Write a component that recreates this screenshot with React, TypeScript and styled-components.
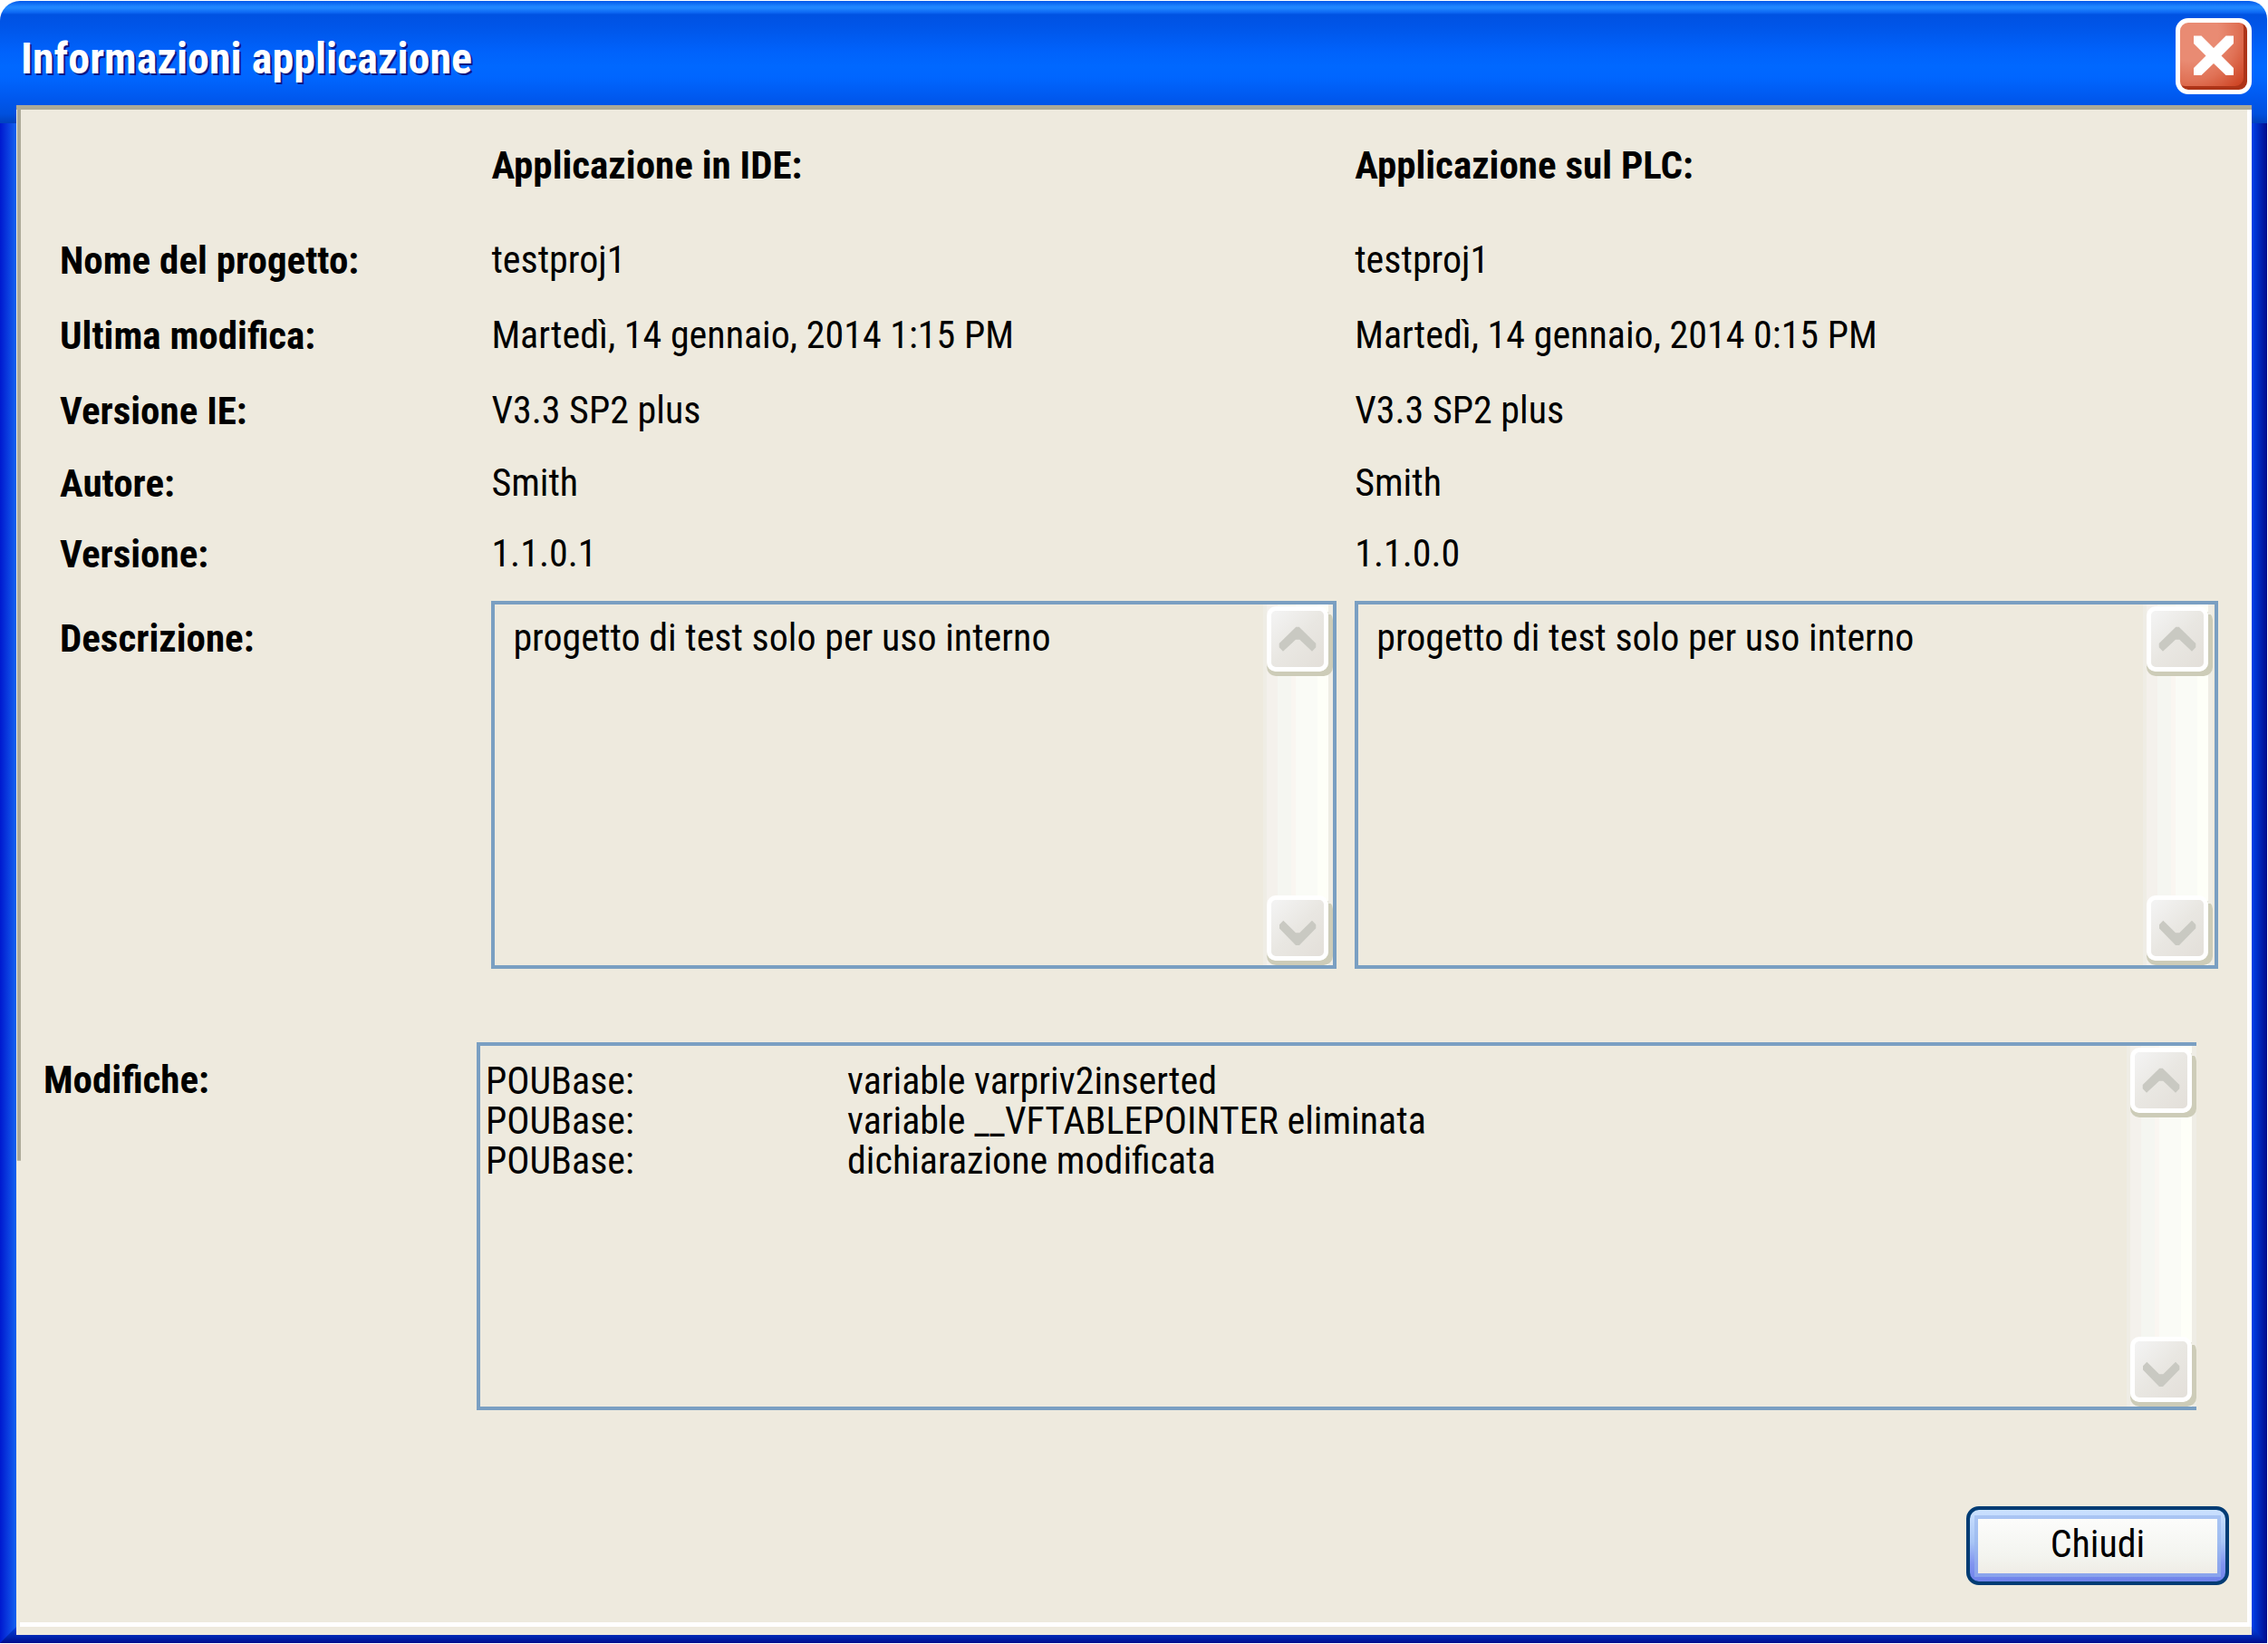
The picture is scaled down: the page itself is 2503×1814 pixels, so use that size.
import React, { useState } from "react";
import styled, { createGlobalStyle, css } from "styled-components";

const color = {
  face: "#eeeade",
  frame: "#7a9fc2",
  bevel: "#aca997",
  shadow: "#cdccb8",
  glyph: "#c9c9c2",
};

const GlobalStyle = createGlobalStyle`
  *, *::before, *::after { box-sizing: border-box; }
  html, body { margin: 0; background: #fff; }
  body, button, textarea {
    font-family: "Roboto Condensed", "Arial Narrow", "Liberation Sans", Arial, sans-serif;
    font-size: 42px;
    line-height: 52px;
    color: #000;
  }
`;

const Window = styled.main`
  position: relative;
  display: flex;
  flex-direction: column;
  min-height: calc(100vh - 2px);
  margin: 1px 1px 1px 0;
  padding: 0 17px 9px 18px;
  border-radius: 22px 20px 0 0;
  overflow: hidden;
  background:
    linear-gradient(
      180deg,
      #0058ea 0, #1f85ff 6px, #2087ff 8px, #0c66f2 13px, #0052e2 15px,
      #0055e8 28px, #0062fb 55px, #0068ff 72px, #0066ff 84px, #0058ee 108px,
      #0050dd 125px, #0042c0 134px, #0042c0 135px
    ) 0 0 / 100% 135px no-repeat,
    linear-gradient(90deg, #0019cf, #1462f0) 0 135px / 18px 100% no-repeat,
    linear-gradient(90deg, #0042ea, #000c8c) 100% 135px / 17px 100% no-repeat;

  &::before {
    content: "";
    position: absolute;
    inset: auto 0 0 0;
    height: 18px;
    background: linear-gradient(180deg, #0042e0, #0026b0 60%, #000c8c);
    clip-path: polygon(18px 0, calc(100% - 17px) 0, 100% 100%, 0 100%);
  }
`;

const TitleBar = styled.header`
  display: flex;
  align-items: flex-start;
  justify-content: space-between;
  height: 115px;
  padding: 19px 0 0 5px;
`;

const Title = styled.h1`
  margin: 0;
  padding-top: 17px;
  font-size: 48px;
  line-height: 56px;
  font-weight: bold;
  color: #fff;
  text-shadow: 2px 2px 0 #0a1883;
`;

const CloseButton = styled.button`
  flex: none;
  width: 84px;
  height: 84px;
  padding: 0;
  border: 5px solid #fff;
  border-radius: 14px;
  background: radial-gradient(circle at 15% 15%, #e98b73 0 35%, #e07256 60%, #d04a2a 85%, #c23514);
  box-shadow: inset -4px -4px 0 #ad3418;

  svg {
    display: block;
  }
`;

const Panel = styled.div`
  position: relative;
  flex: 1;
  display: flex;
  flex-direction: column;
  padding: 40px 37px 55px 30px;
  background:
    linear-gradient(#fff, #fff) 100% 5px / 5px calc(100% - 14px) no-repeat,
    linear-gradient(#fff, #fff) 4px calc(100% - 9px) / 100% 5px no-repeat,
    linear-gradient(${color.bevel}, ${color.bevel}) 0 0 / 100% 5px no-repeat,
    linear-gradient(${color.bevel}, ${color.bevel}) 1px 0 / 4px 69% no-repeat,
    ${color.face};
`;

const InfoTable = styled.table`
  width: calc(100% - 18px);
  margin-left: 18px;
  border-collapse: collapse;
  table-layout: fixed;

  th, td {
    padding: 0;
    text-align: left;
    vertical-align: top;
  }

  th {
    font-size: 43px;
  }
`;

const Row = styled.tr<{ $height: number }>`
  height: ${(p) => p.$height}px;
`;

const LabelColumn = styled.col`
  width: 20%;
`;

const ValueColumn = styled.col`
  width: 40%;
`;

const BoxLabel = styled.th`
  && { padding-top: 15px; }
`;

const BoxCell = styled.td<{ $gap?: number }>`
  && { padding-right: ${(p) => p.$gap ?? 0}px; }
`;

const Frame = styled.div<{ $openRight?: boolean; $inset?: number }>`
  display: flex;
  height: 406px;
  padding-right: ${(p) => p.$inset ?? 0}px;
  border: 4px solid ${color.frame};
  ${(p) => p.$openRight && css`border-right: 0;`}
`;

const Description = styled.textarea`
  flex: 1;
  min-width: 0;
  padding: 11px 20px;
  border: 0;
  outline: 0;
  resize: none;
  overflow: hidden;
  background: transparent;
`;

const ScrollTrack = styled.div`
  flex: none;
  display: flex;
  flex-direction: column;
  justify-content: space-between;
  width: 77px;
  padding: 2px 5px 5px 4px;
  background: linear-gradient(
    90deg,
    #efede5 0 4px, #f4f1ec 4px 16px, #f5f6f1 16px 31px, #faf6f1 31px 36px,
    #fafbf6 36px 60px, #fefff8 60px 72px, #efede5 72px
  );
`;

const ScrollButton = styled.button`
  width: 68px;
  height: 72px;
  padding: 0;
  border: 5px solid #fff;
  border-radius: 10px;
  background: linear-gradient(135deg, #f4f4f4, #e9e7e2 50%, #e3dfd9);
  box-shadow: 5px 5px 0 ${color.shadow}, 0 5px 0 ${color.shadow};
  clip-path: polygon(0 0, 68px 0, 68px 9px, 73px 9px, 73px 77px, 0 77px);

  svg {
    display: block;
  }
`;

const Changes = styled.section`
  display: flex;
  margin-top: 81px;
  padding-right: 24px;
`;

const ChangesTitle = styled.h2`
  flex: none;
  width: 478px;
  margin: 0;
  padding-top: 15px;
  font-size: 43px;
  line-height: 52px;
`;

const ChangesBox = styled.div`
  flex: 1;
  min-width: 0;
`;

const ChangeList = styled.table`
  flex: 1;
  align-self: flex-start;
  margin: 17px 0 0 6px;
  border-collapse: collapse;
  line-height: 44px;

  th, td {
    padding: 0;
    text-align: left;
    font-weight: normal;
  }

  th {
    width: 399px;
  }
`;

const Footer = styled.footer`
  display: flex;
  justify-content: flex-end;
  margin-top: auto;
  margin-right: -12px;
`;

const DialogButton = styled.button`
  width: 290px;
  height: 87px;
  padding: 9px;
  border: 4px solid #003c74;
  border-radius: 14px;
  background: linear-gradient(180deg, #cbe1ff, #a9c6f6 45%, #8295f0 75%, #6f82ea);
`;

const ButtonFace = styled.span`
  display: block;
  padding: 2px 0 6px;
  box-shadow: 0 0 0 4px #97b5ec99;
  background: linear-gradient(180deg, #fcfcfb, #f3f4ef 70%, #efece6);
`;

const ScrollArrow = ({ down }: { down?: boolean }) => (
  <svg width="58" height="62" viewBox="5 5 58 62" aria-hidden="true">
    <path
      fill={color.glyph}
      d={
        down
          ? "M14 32.3L18.3 27.7L32 41.3H36.3L50 27.7L54.3 32.3V36.3L36 55H32L14 36.6Z"
          : "M32.3 22.7H35.7L54.3 41V45.3L50 49.7L36.3 36.7H32L18 49.7L13.7 45.3V41Z"
      }
    />
  </svg>
);

const ScrollBar = () => (
  <ScrollTrack>
    <ScrollButton type="button" aria-label="Scorri su">
      <ScrollArrow />
    </ScrollButton>
    <ScrollButton type="button" aria-label="Scorri giù">
      <ScrollArrow down />
    </ScrollButton>
  </ScrollTrack>
);

const rows = [
  { label: "Nome del progetto:", ide: "testproj1", plc: "testproj1", height: 83 },
  {
    label: "Ultima modifica:",
    ide: "Martedì, 14 gennaio, 2014 1:15 PM",
    plc: "Martedì, 14 gennaio, 2014 0:15 PM",
    height: 83,
  },
  { label: "Versione IE:", ide: "V3.3 SP2 plus", plc: "V3.3 SP2 plus", height: 80 },
  { label: "Autore:", ide: "Smith", plc: "Smith", height: 78 },
  { label: "Versione:", ide: "1.1.0.1", plc: "1.1.0.0", height: 78 },
];

const changes = [
  "variable varpriv2inserted",
  "variable __VFTABLEPOINTER eliminata",
  "dichiarazione modificata",
];

export default function App() {
  const [ideText, setIdeText] = useState("progetto di test solo per uso interno");
  const [plcText, setPlcText] = useState("progetto di test solo per uso interno");

  return (
    <>
      <GlobalStyle />
      <Window>
        <TitleBar>
          <Title>Informazioni applicazione</Title>
          <CloseButton type="button" aria-label="Chiudi finestra">
            <svg width="74" height="74" viewBox="5 5 74 74" aria-hidden="true">
              <path
                fill="#fff"
                d="M20 19.5H28.5L42 33L55.5 19.5H64V28L50.5 41.5L64 55V63H55.5L42 50L28.5 63H20V55L33.5 41.5L20 28Z"
              />
            </svg>
          </CloseButton>
        </TitleBar>
        <Panel>
          <InfoTable>
            <colgroup>
              <LabelColumn />
              <ValueColumn />
              <ValueColumn />
            </colgroup>
            <thead>
              <Row $height={105}>
                <td />
                <th scope="col">Applicazione in IDE:</th>
                <th scope="col">Applicazione sul PLC:</th>
              </Row>
            </thead>
            <tbody>
              {rows.map((row) => (
                <Row key={row.label} $height={row.height}>
                  <th scope="row">{row.label}</th>
                  <td>{row.ide}</td>
                  <td>{row.plc}</td>
                </Row>
              ))}
              <Row $height={406}>
                <BoxLabel scope="row" id="description-label">
                  Descrizione:
                </BoxLabel>
                <BoxCell $gap={20}>
                  <Frame>
                    <Description
                      aria-labelledby="description-label"
                      value={ideText}
                      onChange={(e) => setIdeText(e.target.value)}
                    />
                    <ScrollBar />
                  </Frame>
                </BoxCell>
                <BoxCell>
                  <Frame $inset={2}>
                    <Description
                      aria-labelledby="description-label"
                      value={plcText}
                      onChange={(e) => setPlcText(e.target.value)}
                    />
                    <ScrollBar />
                  </Frame>
                </BoxCell>
              </Row>
            </tbody>
          </InfoTable>
          <Changes>
            <ChangesTitle>Modifiche:</ChangesTitle>
            <ChangesBox>
              <Frame $openRight>
                <ChangeList>
                  <tbody>
                    {changes.map((text) => (
                      <tr key={text}>
                        <th scope="row">POUBase:</th>
                        <td>{text}</td>
                      </tr>
                    ))}
                  </tbody>
                </ChangeList>
                <ScrollBar />
              </Frame>
            </ChangesBox>
          </Changes>
          <Footer>
            <DialogButton type="button">
              <ButtonFace>Chiudi</ButtonFace>
            </DialogButton>
          </Footer>
        </Panel>
      </Window>
    </>
  );
}
